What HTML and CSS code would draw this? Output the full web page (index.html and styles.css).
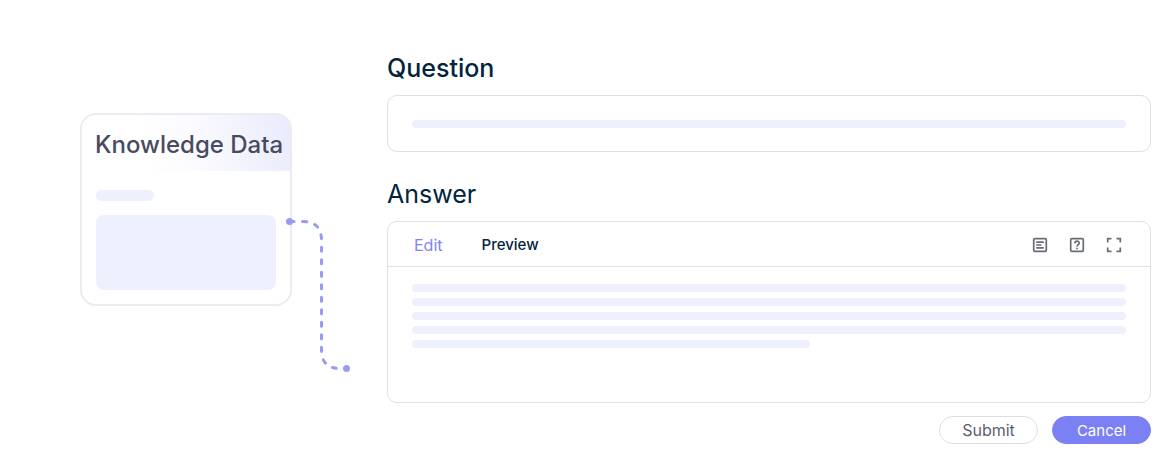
FILE: index.html
```html
<!DOCTYPE html>
<html lang="en">
<head>
<meta charset="utf-8">
<title>Knowledge Data</title>
<link rel="stylesheet" href="styles.css">
</head>
<body>
<main class="page">
  <section class="card">
    <h2 class="card-title">Knowledge Data</h2>
    <div class="card-body">
      <div class="chip"></div>
      <div class="block"></div>
    </div>
    <svg class="connector" width="66" height="156" viewBox="0 0 66 156" fill="none" aria-hidden="true">
      <path d="M5 5.500H17.500Q36.500 5.500 36.500 24.500V134Q36.500 152.500 55 152.500H58" stroke="#989bf2" stroke-width="3" stroke-linecap="round" stroke-dasharray="4 8.500"/>
      <circle cx="4.500" cy="5.500" r="3.500" fill="#989bf2"/>
      <circle cx="61.500" cy="152.500" r="3.500" fill="#989bf2"/>
    </svg>
  </section>
  <section class="form">
    <h2 class="heading heading-strong">Question</h2>
    <div class="panel question"><div class="line"></div></div>
    <h2 class="heading">Answer</h2>
    <div class="panel answer">
      <div class="toolbar">
        <div class="tabs">
          <button class="tab tab-active" type="button">Edit</button>
          <button class="tab" type="button">Preview</button>
        </div>
        <div class="tools">
          <button class="tool" type="button" aria-label="Text"><svg width="16" height="16" viewBox="0 0 16 16" fill="none" stroke="currentColor" stroke-width="1.700"><rect x="1.700" y="1.700" width="12.600" height="12.600" rx="1"/><path d="M4.200 5.200h7.600M4.200 8h5.300M4.200 10.800h7.600"/></svg></button>
          <button class="tool" type="button" aria-label="Help"><svg width="16" height="16" viewBox="0 0 16 16" fill="none" stroke="currentColor" stroke-width="1.700"><rect x="1.700" y="1.700" width="12.600" height="12.600" rx="1"/><path d="M5.900 6.200C5.900 3.500 10.200 3.600 10.200 6.100C10.200 7.500 8 7.700 8 9.500M8 10.700v1.600"/></svg></button>
          <button class="tool" type="button" aria-label="Full screen"><svg width="16" height="16" viewBox="0 0 16 16" fill="none" stroke="currentColor" stroke-width="1.700"><path d="M1.700 5.500V1.700H5.500M10.500 1.700H14.300V5.500M14.300 10.500V14.300H10.500M5.500 14.300H1.700V10.500"/></svg></button>
        </div>
      </div>
      <div class="lines">
        <div class="line"></div>
        <div class="line"></div>
        <div class="line"></div>
        <div class="line"></div>
        <div class="line line-short"></div>
      </div>
    </div>
    <div class="actions">
      <button class="button" type="button">Submit</button>
      <button class="button button-primary" type="button">Cancel</button>
    </div>
  </section>
</main>
</body>
</html>
```
FILE: styles.css
```css
* { box-sizing: border-box; }
body {
  margin: 0;
  background: #fff;
  color: #02253d;
  font-family: Inter, "Liberation Sans", sans-serif;
}
button {
  margin: 0;
  padding: 0;
  border: 0;
  background: none;
  color: inherit;
  font: inherit;
  cursor: pointer;
}
.page {
  display: flex;
  align-items: flex-start;
  gap: 95px;
  padding: 52px 25px 28px 80px;
}
.card {
  position: relative;
  flex: none;
  width: 212px;
  margin-top: 61px;
  border: 2px solid #ebebf2;
  border-radius: 16px;
}
.card-title {
  margin: 0;
  padding: 15px 0 11px 13px;
  border-radius: 14px 14px 0 0;
  background: linear-gradient(78deg, #fff 30%, #fbfaff 55%, #e9ebfd 100%);
  color: #484b60;
  font-size: 24px;
  font-weight: 500;
  line-height: 30px;
  white-space: nowrap;
}
.card-body { padding: 19px 14px 14px; }
.chip {
  width: 58px;
  height: 11px;
  margin-bottom: 14px;
  border-radius: 6px;
  background: #eef0fd;
}
.block {
  height: 75px;
  border-radius: 8px;
  background: #eef0fd;
}
.connector {
  position: absolute;
  top: 101px;
  left: 203px;
}
.form {
  flex: 1;
  min-width: 0;
}
.heading {
  margin: 0 0 11px;
  font-size: 25px;
  font-weight: 400;
  line-height: 32px;
}
.heading-strong { font-weight: 500; }
.panel {
  border: 1px solid #e0e0e2;
  border-radius: 10px;
}
.question {
  margin-bottom: 26px;
  padding: 24px 24px 23px;
}
.line {
  height: 8px;
  border-radius: 4px;
  background: #eef0fd;
}
.toolbar {
  display: flex;
  align-items: center;
  justify-content: space-between;
  padding: 12px 28px 10px 26px;
  border-bottom: 1px solid #e0e0e2;
}
.tabs {
  display: flex;
  gap: 39px;
}
.tab {
  font-size: 15px;
  font-weight: 500;
  line-height: 22px;
}
.tab-active {
  color: #8184f5;
  font-size: 16px;
  font-weight: 400;
}
.tools {
  display: flex;
  gap: 21px;
  color: #686c74;
}
.tool {
  display: flex;
}
.lines {
  display: grid;
  gap: 6px;
  padding: 17px 24px 54px;
}
.line-short { width: 398px; }
.actions {
  display: flex;
  justify-content: flex-end;
  gap: 14px;
  margin-top: 13px;
}
.button {
  width: 99px;
  height: 28px;
  border: 1px solid #dedfe5;
  border-radius: 14px;
  color: #5b6070;
  font-size: 16px;
}
.button-primary {
  border-color: #7b80f4;
  background: #7b80f4;
  color: #fff;
  font-size: 15px;
}
```
